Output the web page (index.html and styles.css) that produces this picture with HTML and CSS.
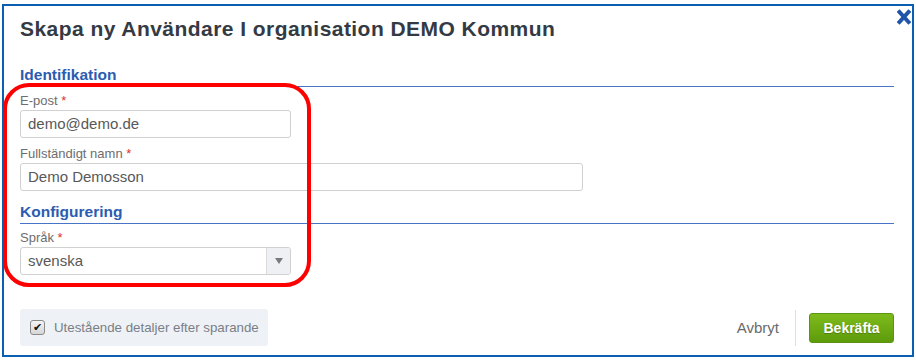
FILE: index.html
```html
<!DOCTYPE html>
<html lang="sv">
<head>
  <meta charset="UTF-8" />
  <meta name="viewport" content="width=device-width, initial-scale=1.0"/>
  <title>Skapa ny Användare</title>
  <link rel="stylesheet" href="styles.css">
</head>
<body>

  <div class="modal">
    <a class="close" href="#" title="Stäng">
      <svg width="14" height="16" viewBox="0 0 14 16"><path d="M2.5 3 L11.5 13 M11.5 3 L2.5 13" stroke="#1f55a9" stroke-width="4" stroke-linecap="square"/></svg>
    </a>

    <h1 class="title">Skapa ny Användare I organisation DEMO Kommun</h1>

    <h3 class="section-head">Identifikation</h3>
    <label class="field-label">E-post <span class="req">*</span></label>
    <div class="input short">demo@demo.de</div>

    <label class="field-label gap">Fullständigt namn <span class="req">*</span></label>
    <div class="input long">Demo Demosson</div>

    <h3 class="section-head second">Konfigurering</h3>
    <label class="field-label">Språk <span class="req">*</span></label>
    <div class="select short">
      <span class="select-value">svenska</span>
      <span class="select-arrow"><span class="caret"></span></span>
    </div>

    <div class="footer">
      <div class="keep-open">
        <span class="check">✔</span>
        <span>Utestående detaljer efter sparande</span>
      </div>
      <div class="actions">
        <a class="cancel" href="#">Avbryt</a>
        <span class="divider"></span>
        <button class="confirm">Bekräfta</button>
      </div>
    </div>

    <!-- annotation drawn over the form fields -->
    <div class="highlight"></div>
  </div>

</body>
</html>
```

FILE: styles.css
```css
body { margin: 0; background: #fff; font-family: "Liberation Sans", Arial, sans-serif; }
.modal { position: relative; margin: 4px 0 0 2px; width: 912px; height: 353px; box-sizing: border-box; border: 2px solid #0b5fb0; padding: 11px 18px 9px 16px; display: flex; flex-direction: column; }
.close { position: absolute; top: 3px; right: 1px; width: 14px; height: 16px; }
.close svg { display: block; }
.title { margin: 0; font-size: 21px; line-height: 24px; letter-spacing: 0.45px; font-weight: bold; color: #343a44; }
.section-head { margin: 25px 0 0; padding-bottom: 2px; font-size: 15.5px; line-height: 18px; font-weight: bold; color: #2c5cb0; border-bottom: 1px solid #4774c6; }
.section-head.second { margin-top: 12px; }
.field-label { display: block; margin-top: 6px; font-size: 13px; line-height: 16px; color: #6d6d6d; }
.field-label.gap { margin-top: 8px; }
.req { color: #d9362b; }
.input, .select { margin-top: 1px; height: 28px; box-sizing: border-box; border: 1px solid #d0d0d0; border-radius: 3px; font-size: 15px; line-height: 26px; color: #585858; }
.input { padding: 0 7px; }
.short { width: 271px; }
.long { width: 563px; }
.select { display: flex; }
.select-value { flex: 1; padding: 0 7px; }
.select-arrow { width: 23px; background: #eef0f4; border-left: 1px solid #dadada; border-radius: 0 2px 2px 0; display: flex; align-items: center; justify-content: center; }
.caret { width: 0; height: 0; border-left: 4px solid transparent; border-right: 4px solid transparent; border-top: 6px solid #7a7a7a; }
.footer { margin-top: auto; display: flex; justify-content: space-between; align-items: center; }
.keep-open { height: 37px; padding: 0 9px 0 10px; background: #eef1f5; border-radius: 3px; display: flex; align-items: center; gap: 9px; font-size: 13.3px; color: #7a7f87; }
.check { width: 13px; height: 13px; border: 1px solid #8a8a8a; border-radius: 3px; background: linear-gradient(#f4f4f4, #d6d6d6); font-size: 11px; line-height: 13px; text-align: center; color: #111; }
.actions { display: flex; align-items: center; }
.cancel { font-size: 15px; color: #6a6a6a; text-decoration: none; }
.divider { width: 1px; height: 36px; background: #e0e0e0; margin: 0 13px 0 16px; }
.confirm { width: 85px; height: 30px; border: 1px solid #5a9410; border-radius: 3px; background: linear-gradient(#7dbb1c, #5e9b0c); color: #fff; font-family: "Liberation Sans", Arial, sans-serif; font-size: 14px; font-weight: bold; text-shadow: 0 1px 1px rgba(0,0,0,0.25); cursor: pointer; }
.highlight { position: absolute; left: -1px; top: 77px; width: 308px; height: 204px; box-sizing: border-box; border: 4px solid #f00; border-radius: 26px; pointer-events: none; }
```
